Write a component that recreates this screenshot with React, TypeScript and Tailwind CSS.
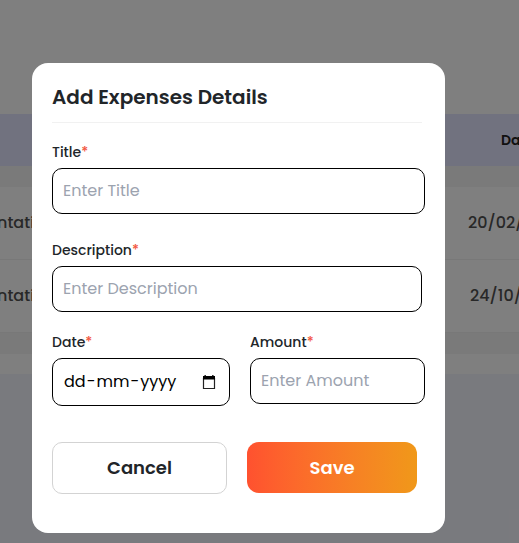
import React from "react";

function Label({ text }: { text: string }) {
  return (
    <label className="flex h-5 items-center text-[14px] leading-5 font-medium text-[#212529]">
      <span>{text}</span>
      <span className="text-[#f2553d]">*</span>
    </label>
  );
}

function Row({ name, date, dateWidth }: { name: string; date: string; dateWidth: string }) {
  return (
    <div className="flex h-[73px] items-center justify-between overflow-hidden border-b border-[#f0f0f0] bg-white text-[16px] text-[#505050]">
      <span className="-ml-[3px] font-medium">{name}</span>
      <span className={`shrink-0 whitespace-nowrap font-medium ${dateWidth}`}>{date}</span>
    </div>
  );
}

export default function App() {
  return (
    <div className="relative h-[543px] w-[519px] overflow-hidden bg-[#f3f4fc] font-['Poppins',sans-serif]">
      <div className="flex h-full flex-col">
        <div className="h-[114px] bg-white" />
        <div className="flex h-[52px] items-center justify-end overflow-hidden bg-[#e2e4ff]">
          <span className="w-[18px] whitespace-nowrap text-[14px] font-semibold text-[#222]">Date</span>
        </div>
        <div className="h-[21px] bg-[#f4f4f4]" />
        <Row name="ntation" date="20/02/2024" dateWidth="w-[51px]" />
        <Row name="ntation" date="24/10/2024" dateWidth="w-[49px]" />
        <div className="h-[21px] bg-[#f4f4f4]" />
        <div className="h-5 bg-white" />
      </div>

      <div className="absolute inset-0 bg-black/50">
        <div className="mt-[63px] ml-8 flex h-[470px] w-[413px] flex-col rounded-[16px] bg-white pl-5">
          <div className="flex h-[60px] w-[370px] items-center border-b border-[#f1f1f1] pt-[9px]">
            <h1 className="text-[20px] leading-7 font-semibold whitespace-nowrap text-[#212529]">Add Expenses Details</h1>
          </div>
          <div className="mt-[19px] flex w-[373px] flex-col gap-[6px]">
            <Label text="Title" />
            <input className="h-[46px] w-full rounded-[10px] border border-black px-[10px] pb-[2px] text-[16px] outline-none placeholder:text-[#9ca3af]" placeholder="Enter Title" />
          </div>
          <div className="mt-[26px] flex w-[370px] flex-col gap-[6px]">
            <Label text="Description" />
            <input className="h-[46px] w-full rounded-[10px] border border-black px-[10px] pb-[2px] text-[16px] outline-none placeholder:text-[#9ca3af]" placeholder="Enter Description" />
          </div>
          <div className="mt-5 flex gap-5">
            <div className="flex w-[178px] flex-col gap-[6px]">
              <Label text="Date" />
              <div className="flex h-12 items-center justify-between rounded-[10px] border border-black pr-[13px] pl-[10px] text-[16px] text-black">
                <span className="flex">
                  <span className="px-px">dd</span>-<span className="px-px">mm</span>-<span className="px-px">yyyy</span>
                </span>
                <svg width="14" height="15" viewBox="0 0 14 15" fill="none">
                  <path d="M1.5 3v10.5h11V3" stroke="#222" strokeWidth="1.2" />
                  <path d="M1 1h12v3.5H1zM2.5 0h1.3v1.5H2.5zM10.2 0h1.3v1.5h-1.3z" fill="black" />
                </svg>
              </div>
            </div>
            <div className="flex w-[175px] flex-col gap-[6px]">
              <Label text="Amount" />
              <input className="h-[46px] w-full rounded-[10px] border border-black px-[10px] pb-[2px] text-[16px] outline-none placeholder:text-[#9ca3af]" placeholder="Enter Amount" />
            </div>
          </div>
          <div className="mt-9 flex gap-5">
            <button className="h-[52px] w-[175px] rounded-[10px] border border-[#d3d3d3] pb-[2px] text-[18px] font-semibold text-[#212529]">Cancel</button>
            <button className="h-[51px] w-[170px] rounded-[12px] bg-linear-to-r from-[#ff512f] to-[#f09819] text-[18px] font-semibold text-white">Save</button>
          </div>
        </div>
      </div>
    </div>
  );
}
